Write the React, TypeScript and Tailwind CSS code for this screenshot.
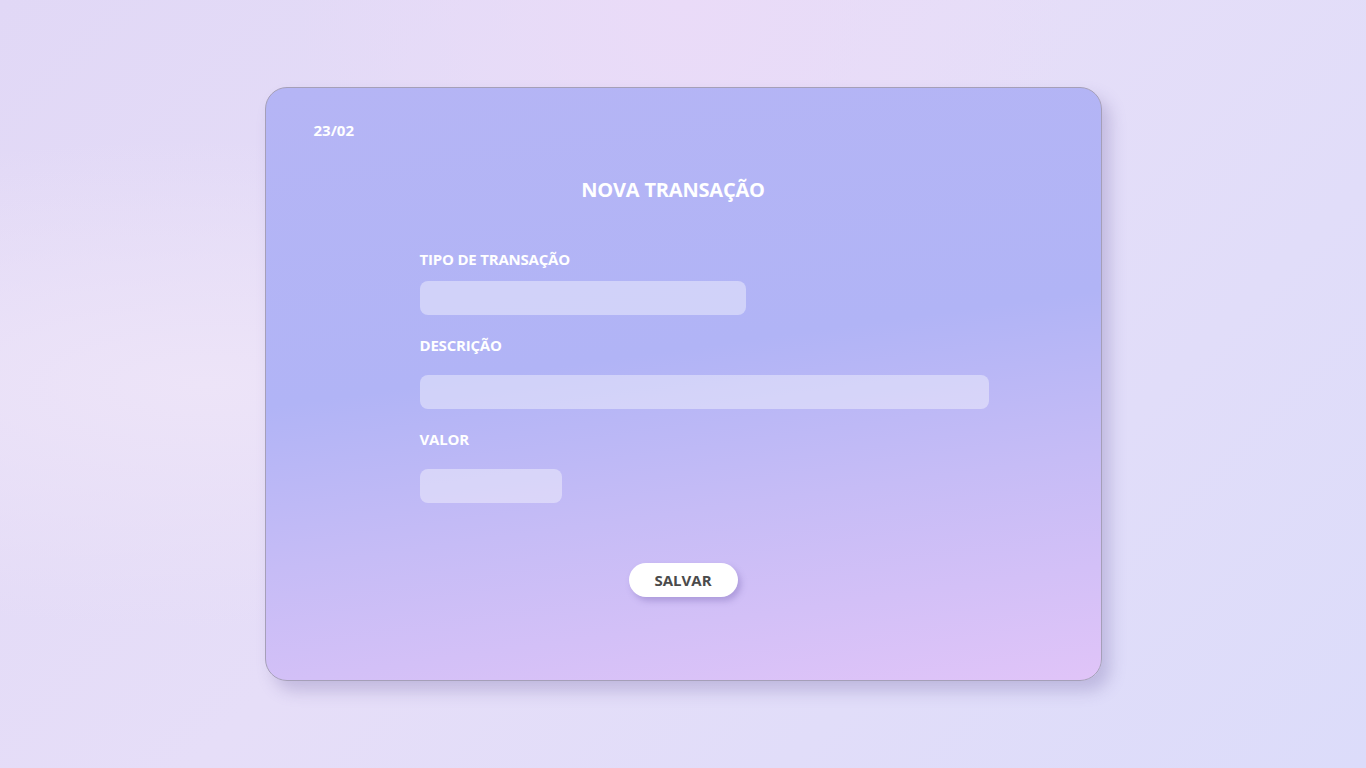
import React from "react";

function Field({
  label,
  inputClass,
  labelGap,
}: {
  label: string;
  inputClass: string;
  labelGap: string;
}) {
  return (
    <div className="flex flex-col">
      <label className={`text-[15px] leading-5 font-bold text-white tracking-[-0.2px] ${labelGap}`}>{label}</label>
      <input
        type="text"
        className={`h-[34px] rounded-lg bg-white/40 outline-none border-0 px-3 text-sm text-gray-700 ${inputClass}`}
      />
    </div>
  );
}

export default function App() {
  return (
    <div
      className="min-h-screen w-full flex items-start justify-center pt-[87px] bg-[radial-gradient(ellipse_at_15%_50%,#ede4f8_0%,transparent_45%),radial-gradient(ellipse_at_50%_0%,#eadbf8_0%,transparent_40%),linear-gradient(135deg,#e1d8f6_0%,#e6def8_45%,#dcdcfa_100%)]"
      style={{ fontFamily: '"Open Sans", "Noto Sans", sans-serif' }}
    >
      <div className="w-[837px] h-[594px] rounded-[22px] border border-[#a59fb8] bg-[linear-gradient(172deg,#b5b5f5_0%,#b1b4f6_45%,#c6bcf6_68%,#e0c4f8_100%)] shadow-[8px_10px_16px_rgba(120,110,170,0.32)] flex flex-col">
        <div className="pl-12 pt-8 text-[15px] leading-5 font-bold text-white">23/02</div>

        <h1 className="mt-9 pr-5 text-center text-[20px] leading-7 font-bold text-white tracking-[-0.2px]">
          NOVA TRANSAÇÃO
        </h1>

        <form className="mt-[45px] pl-[154px] flex flex-col gap-5" onSubmit={(e) => e.preventDefault()}>
          <Field label="TIPO DE TRANSAÇÃO" labelGap="mb-3" inputClass="w-[326px]" />
          <Field label="DESCRIÇÃO" labelGap="mb-5" inputClass="w-[569px]" />
          <Field label="VALOR" labelGap="mb-5" inputClass="w-[142px]" />
        </form>

        <div className="mt-[60px] flex justify-center">
          <button className="w-[109px] h-[34px] rounded-full bg-white text-[15px] font-bold text-[#4b4b4b] shadow-[3px_4px_6px_rgba(110,90,170,0.35)]">
            SALVAR
          </button>
        </div>
      </div>
    </div>
  );
}
